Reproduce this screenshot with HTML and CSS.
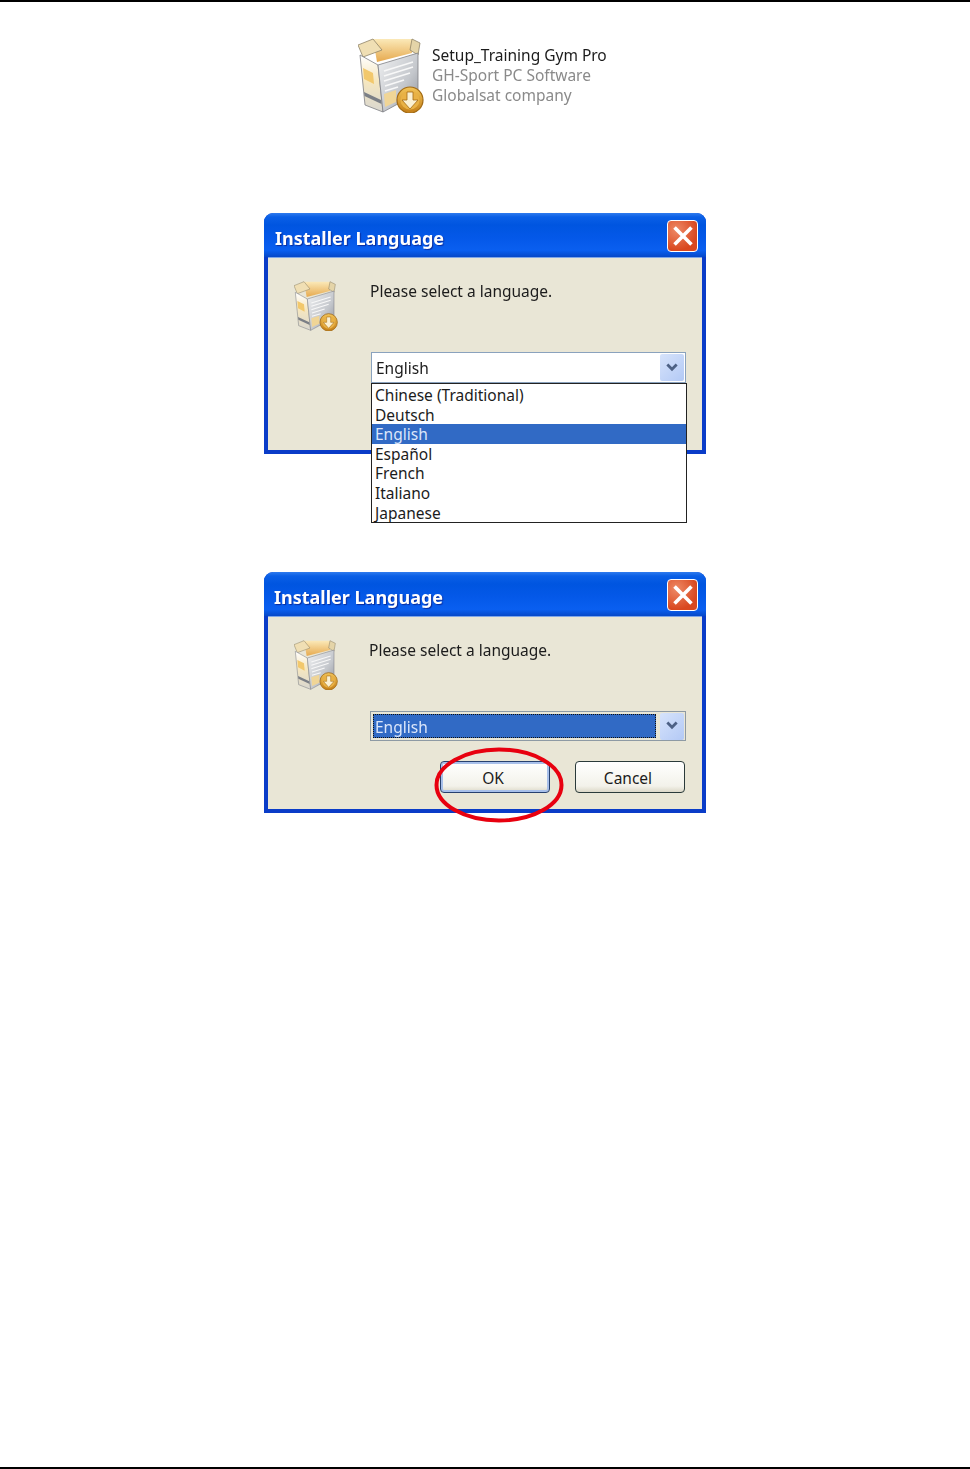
FILE: index.html
```html
<!DOCTYPE html>
<html lang="en">

<head>
    <meta charset="UTF-8">
    <meta name="viewport" content="width=device-width, initial-scale=1.0">
    <title>Installer Language</title>
    <link rel="stylesheet" href="styles.css">
</head>

<body>
    <div class="page">
        <div class="file-row">
            <svg class="box-icon-large" viewBox="0 0 66 75">
                <defs>
                    <linearGradient id="inside" x1="0" y1="0" x2="0" y2="1">
                        <stop offset="0" stop-color="#fbe9b8" />
                        <stop offset="1" stop-color="#e6a94e" />
                    </linearGradient>
                    <linearGradient id="sideRight" x1="0" y1="0" x2="1" y2="1">
                        <stop offset="0" stop-color="#f1f2f3" />
                        <stop offset="0.6" stop-color="#c4c7cc" />
                        <stop offset="1" stop-color="#8e929a" />
                    </linearGradient>
                    <linearGradient id="sideLeft" x1="0" y1="0" x2="0" y2="1">
                        <stop offset="0" stop-color="#ffffff" />
                        <stop offset="0.45" stop-color="#f6e7bf" />
                        <stop offset="1" stop-color="#d9d7d0" />
                    </linearGradient>
                    <linearGradient id="coin" x1="0" y1="0" x2="0" y2="1">
                        <stop offset="0" stop-color="#f2c458" />
                        <stop offset="1" stop-color="#c47f18" />
                    </linearGradient>
                    <symbol id="box" viewBox="0 0 66 75">
                        <path d="M15 1 54 1 54 15 19 24z" fill="url(#inside)" />
                        <path d="M0 7 15 1 24 12 5 19z" fill="#f0dfb4" stroke="#8f8468" stroke-width="0.8" />
                        <path d="M54 1 62 5 60 17 52 12z" fill="#e4d4a8" stroke="#8f8468" stroke-width="0.8" />
                        <path d="M2 17 20 27 25 74 7 67z" fill="url(#sideLeft)" stroke="#7d7f84" stroke-width="0.8" />
                        <path d="M6 54 23 62 23.500 66 6.500 58z" fill="#7b7f86" />
                        <path d="M5 30 15 35 16 46 6 41z" fill="#f2c86c" />
                        <path d="M20 27 60 15 60 55 25 74z" fill="url(#sideRight)" stroke="#7d7f84" stroke-width="0.8" />
                        <path d="M26 33 55 24M26 38 55 29M26 43 52 35M27 48 46 42M27 53 40 49" stroke="#f8f8f8" stroke-width="1.700" fill="none" />
                        <path d="M26 56 38 52 38 64 27 69z" fill="#f0d596" />
                        <circle cx="52" cy="62" r="13" fill="url(#coin)" stroke="#a36b14" stroke-width="1.200" />
                        <circle cx="52" cy="62" r="9.500" fill="#e9b145" />
                        <path d="M49 54h6v8h5l-8 9-8-9h5z" fill="#fbf0d2" stroke="#a36b14" stroke-width="0.800" />
                    </symbol>
                </defs>
                <use href="#box" />
            </svg>
            <div class="file-text">
                <div class="file-name">Setup_Training Gym Pro</div>
                <div class="file-info">GH-Sport PC Software</div>
                <div class="file-info">Globalsat company</div>
            </div>
        </div>

        <div class="dialog dialog-open">
            <div class="title-bar">
                <span class="title-text">Installer Language</span>
                <span class="close-btn">
                    <svg viewBox="0 0 20 20"><path d="M4 4 16 16M16 4 4 16" stroke="#fff" stroke-width="3" stroke-linecap="square" /></svg>
                </span>
            </div>
            <div class="dialog-body">
                <svg class="box-icon" viewBox="0 0 66 75"><use href="#box" /></svg>
                <div class="dialog-main">
                    <div class="prompt">Please select a language.</div>
                    <div class="combo">
                        <span class="combo-value">English</span>
                        <span class="combo-arrow">
                            <svg viewBox="0 0 12 10"><path d="M2 2 6 6 10 2" fill="none" stroke="#4d6185" stroke-width="2.400" /></svg>
                        </span>
                        <ul class="lang-list">
                            <li>Chinese (Traditional)</li>
                            <li>Deutsch</li>
                            <li class="selected">English</li>
                            <li>Español</li>
                            <li>French</li>
                            <li>Italiano</li>
                            <li>Japanese</li>
                        </ul>
                    </div>
                </div>
            </div>
        </div>

        <div class="dialog dialog-closed">
            <div class="title-bar">
                <span class="title-text">Installer Language</span>
                <span class="close-btn">
                    <svg viewBox="0 0 20 20"><path d="M4 4 16 16M16 4 4 16" stroke="#fff" stroke-width="3" stroke-linecap="square" /></svg>
                </span>
            </div>
            <div class="dialog-body">
                <svg class="box-icon" viewBox="0 0 66 75"><use href="#box" /></svg>
                <div class="dialog-main">
                    <div class="prompt">Please select a language.</div>
                    <div class="combo combo-focus">
                        <span class="combo-value">English</span>
                        <span class="combo-arrow">
                            <svg viewBox="0 0 12 10"><path d="M2 2 6 6 10 2" fill="none" stroke="#4d6185" stroke-width="2.400" /></svg>
                        </span>
                    </div>
                    <div class="buttons">
                        <button class="btn btn-default">OK</button>
                        <button class="btn">Cancel</button>
                        <svg class="red-ring" viewBox="0 0 130 76"><ellipse cx="65" cy="38" rx="62.500" ry="35.500" fill="none" stroke="#e8000f" stroke-width="4" /></svg>
                    </div>
                </div>
            </div>
        </div>
    </div>
</body>

</html>
```

FILE: styles.css
```css
html, body {
    margin: 0;
    background-color: #fff;
}

.page {
    height: 1469px;
    box-sizing: border-box;
    border-top: 2px solid #000;
    border-bottom: 2px solid #000;
    display: flex;
    flex-direction: column;
    align-items: center;
    font-family: "Noto Sans", Tahoma, sans-serif;
    color: #1c1c1c;
}

.file-row {
    width: 254px;
    margin-top: 36px;
    display: flex;
    gap: 8px;
}

.box-icon-large {
    width: 66px;
    height: 75px;
    flex: none;
    filter: blur(0.7px);
}

.file-text {
    padding-top: 7px;
    font-size: 15.5px;
    line-height: 20px;
    white-space: nowrap;
    filter: blur(0.3px);
}

.file-info {
    color: #8a8a8a;
}

.dialog {
    width: 442px;
    height: 241px;
    margin-top: 100px;
    display: flex;
    flex-direction: column;
    box-sizing: border-box;
    border-radius: 9px 9px 0 0;
    background-color: #0a3cc8;
}

.dialog-closed {
    margin-top: 118px;
}

.title-bar {
    height: 44px;
    flex: none;
    display: flex;
    align-items: center;
    justify-content: space-between;
    box-sizing: border-box;
    padding: 2px 8px 0 11px;
    border-radius: 9px 9px 0 0;
    background: linear-gradient(#2f7bee 0, #0a5fe6 4px, #0055e0 12px, #0458e8 55%, #0a5ff0 85%, #0648c8 100%);
}

.dialog-closed .title-bar {
    padding-left: 10px;
}

.title-text {
    padding-top: 4px;
    color: #fff;
    font-size: 18px;
    font-weight: bold;
    text-shadow: 1px 1px 1px #0a2c9c;
    filter: blur(0.3px);
}

.close-btn {
    width: 31px;
    height: 32px;
    box-sizing: border-box;
    display: flex;
    align-items: center;
    justify-content: center;
    border: 1px solid #fff;
    border-radius: 4px;
    background: radial-gradient(circle at 30% 30%, #ee8a66, #d9481f 70%);
}

.close-btn svg {
    width: 24px;
    height: 24px;
    filter: blur(0.3px);
}

.dialog-body {
    flex: 1;
    margin: 0 4px 4px;
    padding: 23px 16px 0 25px;
    display: flex;
    gap: 31px;
    border-top: 1px solid #7fa6e8;
    background-color: #e9e6d6;
}

.box-icon {
    width: 46px;
    height: 50px;
    flex: none;
    filter: blur(0.6px);
}

.dialog-main {
    flex: 1;
    min-width: 0;
}

.prompt {
    height: 20px;
    line-height: 20px;
    margin-bottom: 51px;
    font-size: 15.5px;
    filter: blur(0.3px);
}

.dialog-closed .prompt {
    margin-left: -1px;
}

.combo {
    position: relative;
    height: 31px;
    box-sizing: border-box;
    display: flex;
    align-items: center;
    justify-content: space-between;
    padding: 1px;
    border: 1px solid #8aa2bd;
    background-color: #fff;
    font-size: 15.5px;
}

.dialog-open .combo {
    margin-left: 1px;
}

.combo-value {
    padding-left: 3px;
    filter: blur(0.3px);
}

.combo-arrow {
    width: 24px;
    height: 27px;
    box-sizing: border-box;
    display: flex;
    align-items: center;
    justify-content: center;
    border-radius: 2px;
    background: linear-gradient(135deg, #d6e3fb, #b3c9f5);
}

.combo-arrow svg {
    width: 14px;
    height: 12px;
}

.combo-focus {
    height: 30px;
    border-color: #8e9aa4;
    background-color: #e9e6d6;
    gap: 4px;
}

.combo-focus .combo-value {
    flex: 1;
    height: 24px;
    box-sizing: border-box;
    line-height: 24px;
    margin-left: 1px;
    padding: 1px 0 0 2px;
    background-color: #316ac5;
    color: #dbe6fa;
    outline: 1px dotted #111;
    outline-offset: -1px;
}

.lang-list {
    position: absolute;
    top: 30px;
    left: -1px;
    width: 316px;
    margin: 0;
    padding: 1px 0 0;
    list-style: none;
    box-sizing: border-box;
    border: 1px solid #222;
    background-color: #fff;
    z-index: 2;
}

.lang-list li {
    height: 19.6px;
    line-height: 21px;
    padding-left: 3px;
}

.lang-list .selected {
    background-color: #316ac5;
    color: #dbe6fa;
}

.buttons {
    position: relative;
    margin-top: 20px;
    margin-right: 1px;
    display: flex;
    justify-content: flex-end;
    gap: 25px;
}

.btn {
    width: 110px;
    height: 32px;
    padding: 2px 4px 0 0;
    border: 1px solid #2a3a3a;
    border-radius: 4px;
    background: linear-gradient(#fff, #f3f2ea 80%, #dcd8c8);
    font-family: inherit;
    font-size: 15.5px;
    color: #1c1c1c;
}

.btn-default {
    border-color: #27406e;
    box-shadow: inset 0 0 0 2px #a8c0ea;
}

.red-ring {
    position: absolute;
    left: 64px;
    top: -14px;
    width: 130px;
    height: 76px;
    z-index: 3;
}
```
